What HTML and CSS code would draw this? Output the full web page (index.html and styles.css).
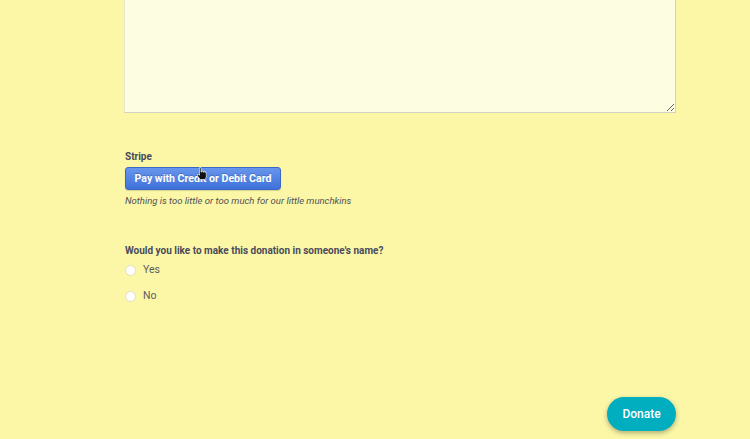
FILE: index.html
```html
<!DOCTYPE html>
<html>
<head>
	<title>Donate</title>
	<meta name="viewport" content="width=device-width,initial-scale=1">
	<link rel="stylesheet" href="styles.css">
</head>
<body>
	<div class="page">
		<textarea class="message"></textarea>

		<div class="field stripe">
			<label class="label">Stripe</label>
			<div class="pay-wrap">
				<button class="pay-btn">Pay with Credit or Debit Card</button>
				<svg class="cursor" width="10" height="13" viewBox="0 0 10 13">
					<path d="M2.5 0.5 h1.5 v4.5 h1 v-1 h1.3 v1.2 h1 v-0.7 h1.2 v1.2 h0.8 v4.2 l-1 2.6 h-5 l-2.8 -3.6 v-1.4 h1.2 l0.8 0.8 z" fill="#111" stroke="#fff" stroke-width="0.6"/>
				</svg>
			</div>
			<p class="hint">Nothing is too little or too much for our little munchkins</p>
		</div>

		<div class="field name-q">
			<label class="label">Would you like to make this donation in someone's name?</label>
			<label class="radio"><input type="radio" name="inname"><span class="dot"></span>Yes</label>
			<label class="radio"><input type="radio" name="inname"><span class="dot"></span>No</label>
		</div>

		<div class="actions">
			<button class="donate-btn">Donate</button>
		</div>
	</div>
</body>
</html>
```

FILE: styles.css
```css
*{
	box-sizing: border-box;
	margin: 0;
	padding: 0;
}

body{
	background-color: #fbf7a7;
	font-family: Roboto, "Liberation Sans", sans-serif;
	color: #4b4b5c;
	width: 750px;
	height: 439px;
	overflow: hidden;
}

.page{
	width: 552px;
	margin-left: 124px;
	display: flex;
	flex-direction: column;
}

.message{
	display: block;
	width: 552px;
	height: 113px;
	background-color: #fdfde1;
	border: 1px solid #d2d2c4;
	border-top: none;
	border-left-color: #e8e8d0;
	resize: vertical;
	outline: none;
}

.field{
	display: flex;
	flex-direction: column;
	align-items: flex-start;
}

.stripe{
	margin-top: 37px;
}

.label{
	font-size: 10px;
	font-weight: bold;
	line-height: 14px;
	color: #4a4a5c;
	padding-left: 1px;
}

.pay-wrap{
	position: relative;
	margin-top: 3px;
	margin-left: 1px;
}

.pay-btn{
	display: block;
	height: 23px;
	width: 156px;
	font-family: inherit;
	font-size: 10.6px;
	font-weight: bold;
	color: #fff;
	background: linear-gradient(#6796ec, #3f71da);
	border: 1px solid #3a66c4;
	border-radius: 3px;
	box-shadow: 0 1px 1px rgba(0,0,0,.15);
	text-shadow: 0 -1px 0 rgba(0,0,0,.2);
}

.cursor{
	position: absolute;
	left: 72px;
	top: 0;
}

.hint{
	margin-top: 4px;
	padding-left: 1px;
	font-size: 9.5px;
	font-style: italic;
	line-height: 14px;
	color: #4f4f55;
}

.name-q{
	margin-top: 36px;
}

.radio{
	display: flex;
	align-items: center;
	font-size: 10.5px;
	line-height: 14px;
	color: #5b5b62;
	margin-top: 5px;
	padding-left: 1px;
}
.radio + .radio{
	margin-top: 12px;
}
.radio input{
	display: none;
}
.radio .dot{
	width: 11px;
	height: 11px;
	border-radius: 50%;
	background: #fff;
	border: 1px solid #e4e0c0;
	margin-right: 7px;
}

.actions{
	display: flex;
	justify-content: flex-end;
	margin-top: 94px;
}

.donate-btn{
	width: 69px;
	height: 34px;
	border: none;
	border-radius: 17px;
	background-color: #00aec0;
	color: #fff;
	font-family: inherit;
	font-size: 12px;
	font-weight: 500;
	box-shadow: 0 2px 5px rgba(0,0,0,.3);
}
```
